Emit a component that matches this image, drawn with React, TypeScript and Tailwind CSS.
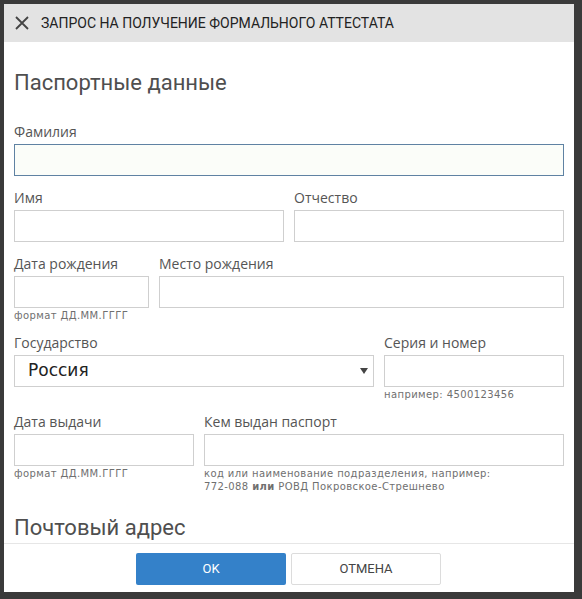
import React from "react";

const labelCls =
  "block h-[18px] leading-[18px] text-[14px] text-[#555] mb-[3px] whitespace-nowrap";
const inputCls = "block h-[32px] w-full border border-[#cfcfcf] bg-white";
const hintCls = "text-[10px] leading-[13px] text-[#6f6f6f] mt-[1px] tracking-[0.4px]";
const font = { fontFamily: '"DejaVu Sans", Verdana, sans-serif' };

function Field({
  label,
  width,
  hint,
  focused,
}: {
  label: string;
  width: string;
  hint?: React.ReactNode;
  focused?: boolean;
}) {
  return (
    <div className={`flex flex-col shrink-0 ${width}`}>
      <span className={labelCls} style={{ fontFamily: '"Open Sans", sans-serif' }}>
        {label}
      </span>
      <div
        className={
          focused
            ? "block h-[32px] w-full border border-[#5f82a3] bg-[#fbfdf9]"
            : inputCls
        }
      />
      {hint && (
        <div className={hintCls} style={font}>
          {hint}
        </div>
      )}
    </div>
  );
}

export default function App() {
  return (
    <div className="w-[582px] h-[599px] bg-[#3a3a3a] pt-[4px] pl-[4px] overflow-hidden">
      <div className="w-[570px] h-[588px] bg-white flex flex-col">
        {/* header */}
        <div className="h-[38px] bg-[#e3e3e3] flex items-center pl-[11px] shrink-0">
          <svg width="14" height="14" viewBox="0 0 14 14" className="shrink-0">
            <path d="M1 1 L13 13 M13 1 L1 13" stroke="#444" strokeWidth="1.8" />
          </svg>
          <span
            className="ml-[12px] text-[14px] text-[#222]"
            style={{ fontFamily: "Roboto, sans-serif" }}
          >
            ЗАПРОС НА ПОЛУЧЕНИЕ ФОРМАЛЬНОГО АТТЕСТАТА
          </span>
        </div>

        {/* body */}
        <div className="flex-1 overflow-hidden px-[10px]">
          <h2
            className="mt-[28px] h-[26px] leading-[26px] text-[22px] text-[#4f4f4f]"
            style={{ fontFamily: "Roboto, sans-serif" }}
          >
            Паспортные данные
          </h2>

          <div className="mt-[27px] flex">
            <Field label="Фамилия" width="w-[550px]" focused />
          </div>

          <div className="mt-[13px] flex gap-[10px] items-start">
            <Field label="Имя" width="w-[270px]" />
            <Field label="Отчество" width="w-[270px]" />
          </div>

          <div className="mt-[13px] flex gap-[10px] items-start">
            <Field label="Дата рождения" width="w-[135px]" hint="формат ДД.ММ.ГГГГ" />
            <Field label="Место рождения" width="w-[405px]" />
          </div>

          <div className="mt-[12px] flex gap-[10px] items-start">
            <div className="flex flex-col w-[360px] shrink-0">
              <span className={labelCls} style={{ fontFamily: '"Open Sans", sans-serif' }}>
                Государство
              </span>
              <div className="h-[32px] border border-[#cfcfcf] bg-white flex items-center justify-between pl-[13px] pr-[5px]">
                <span className="text-[17px] text-[#222]" style={font}>
                  Россия
                </span>
                <svg width="8" height="6" viewBox="0 0 8 6">
                  <path d="M0 0 L8 0 L4 6 Z" fill="#444" />
                </svg>
              </div>
            </div>
            <Field
              label="Серия и номер"
              width="w-[180px]"
              hint="например: 4500123456"
            />
          </div>

          <div className="mt-[12px] flex gap-[10px] items-start">
            <Field label="Дата выдачи" width="w-[180px]" hint="формат ДД.ММ.ГГГГ" />
            <Field
              label="Кем выдан паспорт"
              width="w-[360px]"
              hint={
                <>
                  код или наименование подразделения, например:
                  <br />
                  772-088 <b className="font-bold">или</b> РОВД Покровское-Стрешнево
                </>
              }
            />
          </div>

          <h2
            className="mt-[22px] h-[26px] leading-[26px] text-[22px] text-[#4f4f4f]"
            style={{ fontFamily: "Roboto, sans-serif" }}
          >
            Почтовый адрес
          </h2>
        </div>

        {/* footer */}
        <div className="h-[49px] shrink-0 border-t border-[#e6e6e6] flex justify-center pt-[9px] gap-[5px] pr-[1px]">
          <button
            className="w-[150px] h-[32px] bg-[#3481c9] rounded-[2px] text-white text-[13px]"
            style={{ fontFamily: "Roboto, sans-serif" }}
          >
            OK
          </button>
          <button
            className="w-[150px] h-[32px] bg-white border border-[#dcdcdc] rounded-[2px] text-[#444] text-[13px]"
            style={{ fontFamily: "Roboto, sans-serif" }}
          >
            ОТМЕНА
          </button>
        </div>
      </div>
    </div>
  );
}
